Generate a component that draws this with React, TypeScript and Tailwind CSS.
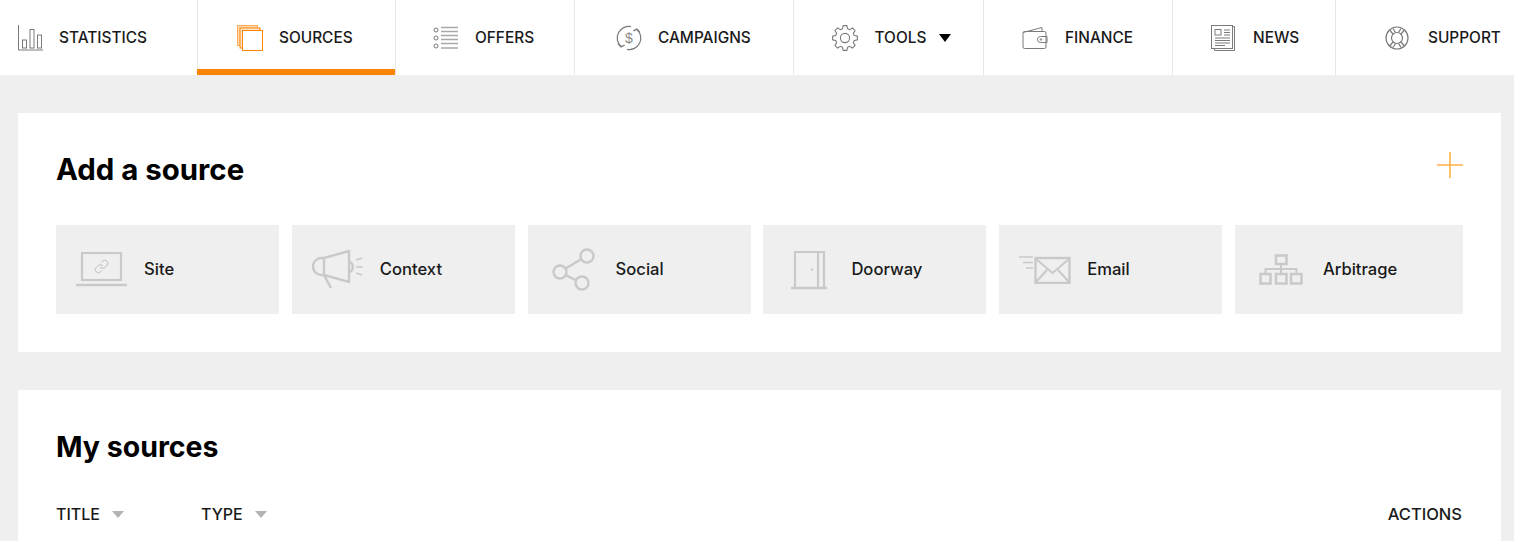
import type { ReactNode } from 'react'
import { Link } from 'lucide-react'

const NAV_ICON = '#7a7a7a'
const CARD_ICON = '#c9c9c9'

function StatisticsIcon() {
  return (
    <svg width={26} height={26} viewBox="0 0 26 26" fill="none" stroke={NAV_ICON} strokeWidth={1}>
      <path d="M1.5 0v25H26" />
      <rect x="5.5" y="15" width="4" height="8" />
      <rect x="13" y="4.5" width="4" height="18.5" />
      <rect x="20.5" y="10" width="4" height="13" />
    </svg>
  )
}

function SourcesIcon() {
  return (
    <svg width={26} height={26} viewBox="0 0 26 26" fill="none" stroke="#ff8400" strokeWidth={1}>
      <rect x="0.5" y="0.5" width="20" height="20" fill="#ffd9b0" stroke="#ffa95a" />
      <rect x="3" y="3" width="20" height="20" fill="#ffe6cc" />
      <rect x="5.5" y="5.5" width="20" height="20" fill="#fff" />
    </svg>
  )
}

function OffersIcon() {
  return (
    <svg width={26} height={26} viewBox="0 0 26 26" fill="none" stroke={NAV_ICON} strokeWidth={1}>
      <circle cx="3" cy="5" r="2" />
      <circle cx="3" cy="13" r="2" />
      <circle cx="3" cy="21" r="2" />
      <path stroke="#a8a8a8" strokeWidth={1.3} d="M8 2.5h17M8 6.5h17M8 10.5h17M8 14.5h17M8 18.5h17M8 23h17" />
    </svg>
  )
}

function CampaignsIcon() {
  return (
    <svg width={26} height={26} viewBox="0 0 26 26" fill="none" stroke={NAV_ICON} strokeWidth={1.2}>
      <path d="M15 1.7A11.5 11.5 0 0 0 5 21.5" />
      <path d="M2 18.5l3 3.4 3.6-1.8" />
      <path d="M11 24.3A11.5 11.5 0 0 0 21 4.5" />
      <path d="M24 7.5l-3-3.4-3.6 1.8" />
      <text
        x="13"
        y="18"
        textAnchor="middle"
        fontSize="14"
        fill="#8a8a8a"
        stroke="none"
        fontFamily="'Liberation Sans', sans-serif"
      >
        $
      </text>
    </svg>
  )
}

// 8 tooth outline, the package's gear has a much smaller hub than the picture
function gearPath() {
  const parts: string[] = []
  for (let i = 0; i < 8; i++) {
    const a = (i * Math.PI) / 4
    const point = (r: number, d: number) => `${(13 + r * Math.sin(a + d)).toFixed(2)} ${(13 - r * Math.cos(a + d)).toFixed(2)}`
    parts.push(`${i === 0 ? 'M' : 'L'}${point(9.6, -0.27)}`, `L${point(12.5, -0.15)}`, `L${point(12.5, 0.15)}`, `L${point(9.6, 0.27)}`)
  }
  return parts.join(' ') + ' Z'
}

function GearIcon() {
  return (
    <svg
      width={26}
      height={26}
      viewBox="1 0 26 26"
      className="overflow-visible"
      fill="none"
      stroke={NAV_ICON}
      strokeWidth={1.1}
      strokeLinejoin="round"
    >
      <path d={gearPath()} />
      <circle cx="13" cy="13" r="4.6" />
    </svg>
  )
}

function WalletIcon() {
  return (
    <svg width={26} height={26} viewBox="1 0 26 26" className="overflow-visible" fill="none" stroke={NAV_ICON} strokeWidth={1}>
      <path d="M1 7.5L20 2.5v4" />
      <path d="M2.5 6.5h20a1.5 1.5 0 0 1 1.5 1.5v14a1.5 1.5 0 0 1-1.5 1.5h-20A1.5 1.5 0 0 1 1 22V8a1.5 1.5 0 0 1 1.5-1.5z" />
      <path d="M25 11.5h-6.5a3 3 0 0 0 0 6H25z" />
      <circle cx="19" cy="14.5" r="0.8" />
    </svg>
  )
}

function NewsIcon() {
  return (
    <svg width={26} height={26} viewBox="0 0 26 26" fill="none" stroke={NAV_ICON} strokeWidth={1}>
      <path d="M21.5 1.5h2v24h-20v-2" />
      <rect x="0.5" y="0.5" width="21" height="23" />
      <rect x="4" y="4.5" width="6" height="5.5" />
      <path d="M13 5h6M13 7.5h6M13 10h6M4 13h15M4 15.5h15M4 18h15M4 20.5h10" />
    </svg>
  )
}

function SupportIcon() {
  return (
    <svg width={26} height={26} viewBox="1 0 26 26" className="overflow-visible" fill="none" stroke={NAV_ICON} strokeWidth={1.2}>
      <circle cx="12" cy="13" r="11" />
      <circle cx="12" cy="13" r="5.5" />
      <path d="M4.5 5l4 4.5M8 3.5l2.5 4M19.5 5l-4 4.5M16 3.5l-2.5 4M4.5 21l4-4.5M8 22.5l2.5-4M19.5 21l-4-4.5M16 22.5l-2.5-4" />
    </svg>
  )
}

function SiteIcon() {
  return (
    <svg width={52} height={36} viewBox="0 0 52 36" fill="none" stroke={CARD_ICON} strokeWidth={2.2}>
      <rect x="6" y="1" width="39" height="27" />
      <path d="M0 33h51" strokeWidth={2.5} />
      <Link x={18} y={7} width={15} height={15} stroke="#bdbdbd" strokeWidth={1.6} />
    </svg>
  )
}

function ContextIcon() {
  return (
    <svg width={52} height={40} viewBox="0 0 52 40" fill="none" stroke={CARD_ICON} strokeWidth={2.4}>
      <path d="M37 1L12 8H9.5a8.5 8.5 0 0 0 0 17H12l25 7z" />
      <path d="M12 8v17M12 25l7 13" />
      <path d="M37 12c5 1 5 9 0 10" />
      <path d="M44 10l6-2M44 17h7M44 23l6 2" strokeWidth={1.6} />
    </svg>
  )
}

function SocialIcon() {
  return (
    <svg width={44} height={44} viewBox="0 0 44 44" fill="none" stroke={CARD_ICON} strokeWidth={2.4}>
      <circle cx="35" cy="8" r="6.5" />
      <circle cx="8" cy="24" r="6.5" />
      <circle cx="30" cy="35" r="6.5" />
      <path d="M13.5 20.5L29.5 11M13.5 27L24.5 32.5" />
    </svg>
  )
}

function DoorwayIcon() {
  return (
    <svg width={36} height={40} viewBox="0 0 36 40" fill="none" stroke={CARD_ICON} strokeWidth={2.2}>
      <path d="M4 38V2h29v36" />
      <path d="M27 2v36" />
      <path d="M0 38h36" strokeWidth={2.4} />
      <circle cx="21" cy="19.5" r="1.2" fill={CARD_ICON} stroke="none" />
    </svg>
  )
}

function EmailIcon() {
  return (
    <svg width={52} height={28} viewBox="0 0 52 28" fill="none" stroke={CARD_ICON} strokeWidth={2.4}>
      <rect x="16.5" y="2" width="34" height="25" />
      <path d="M17 3l16.5 14L50 3M17 26l11-12M50 26L39 14" strokeWidth={2} />
      <path d="M0 1h14M4 6.5h10M7 12h7" strokeWidth={1.6} />
    </svg>
  )
}

function ArbitrageIcon() {
  return (
    <svg width={44} height={31} viewBox="0 0 44 31" fill="none" stroke={CARD_ICON} strokeWidth={2.5}>
      <rect x="17" y="1.5" width="10.5" height="8.5" />
      <rect x="1.5" y="20" width="10" height="9.5" />
      <rect x="17" y="20" width="10.5" height="9.5" />
      <rect x="32" y="20" width="10.5" height="9.5" />
      <path d="M22 10v10M6.5 20v-5h31v5" strokeWidth={2} />
    </svg>
  )
}

function NavItem({ label, icon, className, children }: { label: string; icon: ReactNode; className: string; children?: ReactNode }) {
  return (
    <div className={`flex h-[75px] shrink-0 items-center gap-[16px] ${className}`}>
      <span className="flex w-[26px] shrink-0">{icon}</span>
      <span className="mt-[1px] text-[15.4px] font-medium text-[#1a1a1a]">{label}</span>
      {children}
    </div>
  )
}

function SourceCard({ label, icon, className }: { label: string; icon: ReactNode; className: string }) {
  return (
    <div className={`flex h-[89px] items-center bg-[#efefef] pl-[20px] ${className}`}>
      <span className="flex w-[52px] shrink-0 justify-center">{icon}</span>
      <span className="-mt-[1px] ml-[16px] text-[16.6px] font-medium text-[#1a1a1a]">{label}</span>
    </div>
  )
}

function SortArrow({ className }: { className: string }) {
  return <span className={`h-0 w-0 border-x-[6px] border-t-[7px] border-x-transparent border-t-[#b3b3b3] ${className}`} />
}

export default function App() {
  return (
    <div className="h-[541px] overflow-hidden bg-[#efefef] font-['Inter',sans-serif] text-black">
      <nav className="flex h-[75px] bg-white">
        <NavItem label="STATISTICS" icon={<StatisticsIcon />} className="w-[198px] border-r border-[#e8e8e8] pl-[17px]" />
        <NavItem
          label="SOURCES"
          icon={<SourcesIcon />}
          className="-ml-px w-[198px] border-b-[6px] border-[#ff8400] pt-[6px] pl-[40px]"
        />
        <NavItem label="OFFERS" icon={<OffersIcon />} className="w-[180px] border-x border-[#e8e8e8] pl-[37px]" />
        <NavItem label="CAMPAIGNS" icon={<CampaignsIcon />} className="w-[219px] border-r border-[#e8e8e8] pl-[41px]" />
        <NavItem label="TOOLS" icon={<GearIcon />} className="w-[190px] border-r border-[#e8e8e8] pl-[38.5px]">
          <span className="-ml-[3px] h-0 w-0 border-x-[6px] border-t-[8px] border-x-transparent border-t-black" />
        </NavItem>
        <NavItem label="FINANCE" icon={<WalletIcon />} className="w-[189px] border-r border-[#e8e8e8] pl-[39px]" />
        <NavItem label="NEWS" icon={<NewsIcon />} className="w-[163px] border-r border-[#e8e8e8] pl-[38px]" />
        <NavItem label="SUPPORT" icon={<SupportIcon />} className="flex-1 pl-[50px]" />
      </nav>

      <div className="flex flex-col gap-[38px] pt-[38px] pr-[13px] pl-[18px]">
        <section className="h-[239px] bg-white px-[38px] pt-[38px]">
          <div className="flex h-[37px] items-start justify-between">
            <h2 className="mt-[1px] text-[29.4px] leading-[36px] font-bold">Add a source</h2>
            <svg width={26} height={26} viewBox="0 0 26 26" className="mt-[1px]" stroke="#ffb046" strokeWidth={1.6}>
              <path d="M0 13h26M13 0v26" />
            </svg>
          </div>
          <div className="mt-[37px] flex gap-[12.8px]">
            <SourceCard label="Site" icon={<SiteIcon />} className="w-[223px]" />
            <SourceCard label="Context" icon={<ContextIcon />} className="w-[223px]" />
            <SourceCard label="Social" icon={<SocialIcon />} className="w-[223px]" />
            <SourceCard label="Doorway" icon={<DoorwayIcon />} className="w-[223px]" />
            <SourceCard label="Email" icon={<EmailIcon />} className="w-[223px]" />
            <SourceCard label="Arbitrage" icon={<ArbitrageIcon />} className="flex-1" />
          </div>
        </section>

        <section className="h-[151px] bg-white px-[38px] pt-[39px]">
          <h2 className="text-[28.5px] leading-[36px] font-bold">My sources</h2>
          <div className="mt-[37px] flex items-center text-[16px] font-medium text-[#1a1a1a]">
            <span>TITLE</span>
            <SortArrow className="ml-[12px]" />
            <span className="ml-[77px]">TYPE</span>
            <SortArrow className="ml-[12px]" />
            <span className="mr-[1px] ml-auto text-[16.5px]">ACTIONS</span>
          </div>
        </section>
      </div>
    </div>
  )
}
